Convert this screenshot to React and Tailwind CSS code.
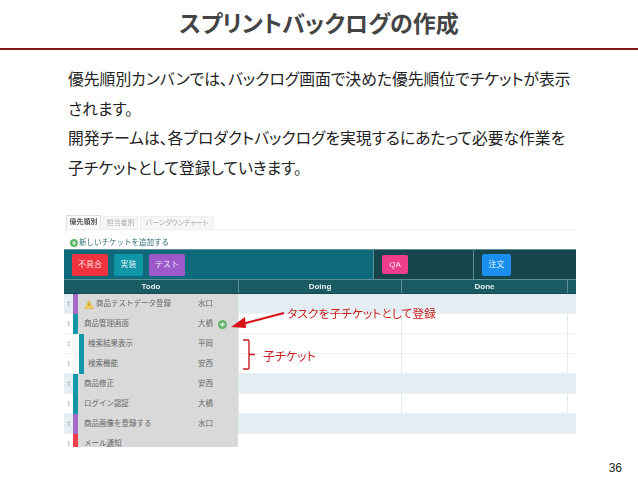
const rows = [
  { name: '商品テストデータ登録', who: '水口', bar: 'bg-[#a569c9]', alt: true, warn: true },
  { name: '商品管理画面', who: '大橋', bar: 'bg-[#1297a8]', plus: true },
  { name: '検索結果表示', who: '平岡', bar: 'bg-[#1297a8]', child: true },
  { name: '検索機能', who: '安西', bar: 'bg-[#1297a8]', child: true },
  { name: '商品修正', who: '安西', bar: 'bg-[#1297a8]', alt: true },
  { name: 'ログイン認証', who: '大橋', bar: 'bg-[#1297a8]' },
  { name: '商品画像を登録する', who: '水口', bar: 'bg-[#a569c9]', alt: true },
  { name: 'メール通知', who: '', bar: 'bg-[#ef3d4a]', clip: true },
];

function Row({ row }) {
  return (
    <div className={`flex shrink-0 ${row.clip ? 'h-[13px] items-start overflow-hidden' : 'h-5 border-b border-[#edf1f3]'} ${row.alt ? 'bg-[#e4eef2]' : 'bg-white'}`}>
      <div className="w-[9px] h-5 shrink-0 flex items-center justify-center text-[8px] text-[#888]">↕</div>
      <div className={`h-5 shrink-0 flex w-[165px] ${row.child ? 'pl-[6px]' : ''}`}>
        <div className={`w-[5px] h-5 shrink-0 ${row.bar}`} />
        <div className={`h-5 flex-1 bg-[#d9d9d9] flex items-center text-[7.5px] text-[#666] ${row.child ? 'pl-1' : 'pl-[6px]'}`}>
          <div className={`flex items-center gap-[2px] ${row.child ? 'w-[110px]' : 'w-[114px]'}`}>
            {row.warn && (
              <svg width="10" height="9" viewBox="0 0 10 9">
                <path d="M5 0.5 L9.5 8.5 L0.5 8.5 Z" fill="#f2cf5b" stroke="#d8a93a" strokeWidth="0.6" />
                <rect x="4.6" y="3.2" width="0.8" height="3" fill="#8a6a1c" />
              </svg>
            )}
            <span className="whitespace-nowrap">{row.name}</span>
          </div>
          <span>{row.who}</span>
          {row.plus && <PlusDot className="ml-[5px]" size={9} />}
        </div>
      </div>
      <div className="w-[163px] shrink-0 border-l border-[#e4ebee]" />
      <div className="w-[166px] shrink-0 border-l border-[#e4ebee]" />
      <div className="flex-1 border-l border-[#e4ebee]" />
    </div>
  );
}

function PlusDot({ size, className = '' }) {
  return (
    <svg className={className} width={size} height={size} viewBox="0 0 10 10">
      <circle cx="5" cy="5" r="5" fill="#5fb56a" />
      <path d="M5 2.5 V7.5 M2.5 5 H7.5" stroke="#e8f5e9" strokeWidth="1.4" />
    </svg>
  );
}

function Tag({ label, className }) {
  return (
    <div className={`flex items-center justify-center rounded-[2px] text-[8px] text-white/90 ${className}`}>{label}</div>
  );
}

export default function App() {
  return (
    <div className="relative w-[638px] h-[479px] overflow-hidden bg-white font-['Liberation_Sans','Noto_Sans_CJK_JP',sans-serif]">
      <header className="h-[50px] border-b-2 border-[#7f1a1a] flex items-center justify-center">
        <h1 className="text-[23px] font-bold text-[#444] [font-feature-settings:'palt']">スプリントバックログの作成</h1>
      </header>

      <div className="mt-[15px] ml-[68px] w-[530px] text-[15.8px] leading-[29.5px] text-[#222] [font-feature-settings:'palt']">
        <p>優先順別カンバンでは、バックログ画面で決めた優先順位でチケットが表示</p>
        <p>されます。</p>
        <p>開発チームは、各プロダクトバックログを実現するにあたって必要な作業を</p>
        <p>子チケットとして登録していきます。</p>
      </div>

      <div className="relative mt-[32px] ml-[64px] w-[512px]">
        <div className="blur-[0.5px]">
          <div className="flex h-[15px] items-end border-b border-[#eeeeee] w-[512px] text-[7px] text-[#aaa] pl-[2px] gap-[2px] [font-feature-settings:'palt']">
            <div className="h-[14px] w-[35px] flex items-center justify-center border border-b-0 border-[#ddd] font-bold text-[#555] bg-white">優先順別</div>
            <div className="h-[13px] w-[35px] flex items-center justify-center border border-b-0 border-[#eee] bg-[#f7f7f7]">担当者別</div>
            <div className="h-[13px] w-[74px] flex items-center justify-center border border-b-0 border-[#eee] bg-[#f7f7f7]">バーンダウンチャート</div>
          </div>
          <div className="h-[19px] flex items-center gap-[1px] pl-[6px] pt-[6px] text-[7.5px] text-[#2d6a77]">
            <PlusDot size={8} />
            <span>新しいチケットを追加する</span>
          </div>

          <div className="flex h-[31px] border-t border-[#5c8f97] border-b">
            <div className="w-[310px] bg-[#0f6a7c] flex items-center pl-2 gap-[6px] border-r border-[#5c8f97]">
              <Tag label="不具合" className="w-9 h-[22px] bg-[#f0323f]" />
              <Tag label="実装" className="w-[29px] h-[22px] bg-[#0f97a8]" />
              <Tag label="テスト" className="w-9 h-[22px] bg-[#9b59c9]" />
            </div>
            <div className="w-[100px] bg-[#17454c] flex items-center pl-[8px] border-r border-[#5c8f97]">
              <Tag label="QA" className="w-[26px] h-[19px] bg-[#ee3d8b]" />
            </div>
            <div className="flex-1 bg-[#17454c] flex items-center pl-2">
              <Tag label="注文" className="w-[29px] h-[22px] bg-[#1a8ff0]" />
            </div>
          </div>

          <div className="flex h-[14px] bg-[#1a5a63] text-[8px] font-bold text-white/90 border-b border-[#15494f]">
            <div className="w-[174px] shrink-0 flex items-center justify-center">Todo</div>
            <div className="w-[163px] shrink-0 flex items-center justify-center border-l border-[#5c8f97]">Doing</div>
            <div className="w-[166px] shrink-0 flex items-center justify-center border-l border-[#5c8f97]">Done</div>
            <div className="flex-1 border-l border-[#5c8f97]" />
          </div>

          <div className="flex flex-col">
            {rows.map((row) => (
              <Row key={row.name} row={row} />
            ))}
          </div>
        </div>

        {/* annotations drawn over the board */}
        <svg className="absolute left-[164px] top-[94px]" width="60" height="24" viewBox="0 0 60 24">
          <path d="M56 4 L14 15" stroke="#d8131a" strokeWidth="2.2" />
          <path d="M3 18 L17 8 L18 19 Z" fill="#d8131a" />
        </svg>
        <div className="absolute left-[223px] top-[94px] whitespace-nowrap text-[11.8px] leading-none text-[#c81e1e] [font-feature-settings:'palt']">タスクを子チケットとして登録</div>
        <svg className="absolute left-[178px] top-[124px]" width="14" height="32" viewBox="0 0 14 32">
          <path d="M1 1 H6 Q7 1 7 2 V29 Q7 30 6 30 H1 M7 15.5 H13" fill="none" stroke="#c81e1e" strokeWidth="1.4" />
        </svg>
        <div className="absolute left-[199px] top-[136px] whitespace-nowrap text-xs leading-none text-[#c81e1e] [font-feature-settings:'palt']">子チケット</div>
      </div>

      <div className="absolute right-[16px] bottom-[3px] text-xs text-[#222]">36</div>
    </div>
  );
}
